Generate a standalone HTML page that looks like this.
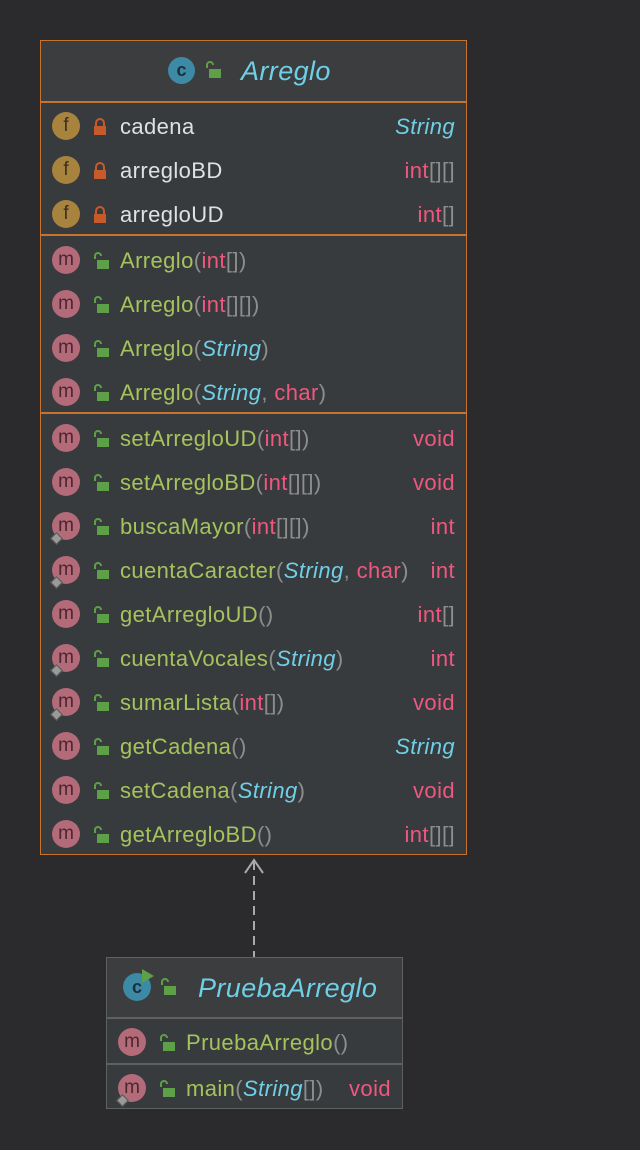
<!DOCTYPE html>
<html><head><meta charset="utf-8"><style>
body{margin:0;width:640px;height:1150px;background:#2b2a2d;position:relative;overflow:hidden;font-family:"Liberation Sans",sans-serif;}
.box{position:absolute;background:#3c3f41;}
.hdr{position:absolute;left:0;right:0;background:#3a3b3c;}
.r{position:absolute;left:0;right:0;height:44px;font-size:22px;line-height:46px;letter-spacing:0.4px;}
.ic{position:absolute;width:28px;height:28px;border-radius:50%;top:8px;left:12px;text-align:center;line-height:27px;font-size:19px;color:#3a2f22;letter-spacing:0}
.f{background:#a8833e;}
.m{background:#b36a79;color:#4a2730;}
.lk{position:absolute;top:14px;left:52px;}
.t{position:absolute;left:80px;white-space:nowrap;}
.rt{position:absolute;right:12px;white-space:nowrap;}
.g{color:#a5c25c}.w{color:#e0e0e0}.c{color:#6fcfe6;font-style:italic}.p{color:#f0577f}.b{color:#8d8d8d}
.sep{position:absolute;left:0;right:0;height:2px;}
.dia{position:absolute;left:12px;top:30px;width:7px;height:7px;transform:rotate(45deg);background:#9a9a9a;border:1px solid #555;}
</style></head><body>

<div class="box" style="left:40px;top:40px;width:427px;height:815px;border:1px solid #c8732d;box-sizing:border-box;background:#383b3e">
 <div class="hdr" style="top:0;height:60px;background:#3b3d3e"></div>
 <div style="position:absolute;left:127px;top:16px;width:27px;height:27px;border-radius:50%;background:#3c8aa6;color:#1f2f3a;text-align:center;line-height:27px;font-size:18px;font-weight:bold">c</div>
 <svg style="position:absolute;left:163px;top:20px" width="18" height="18"><path d="M3 7V4a3 3 0 0 1 6 0" stroke="#5ea048" stroke-width="2" fill="none"/><rect x="5" y="8" width="12" height="9" fill="#5ea048"/></svg>
 <div style="position:absolute;left:200px;top:15px;font-size:27px;font-style:italic;color:#6fcfe6;letter-spacing:0.4px">Arreglo</div>
 <div class="sep" style="top:60px;background:#c8732d"></div>
</div>

<div class="box" style="left:106px;top:957px;width:297px;height:152px;border:1px solid #5e6062;box-sizing:border-box;background:#383b3e">
 <div class="hdr" style="top:0;height:59px;background:#3b3d3e"></div>
 <div style="position:absolute;left:16px;top:15px;width:28px;height:28px;border-radius:50%;background:#3c8aa6;color:#1f2f3a;text-align:center;line-height:28px;font-size:18px;font-weight:bold">c</div>
 <svg style="position:absolute;left:34px;top:10px" width="14" height="16"><path d="M1 1L13 8L1 15Z" fill="#5ea048"/></svg>
 <svg style="position:absolute;left:52px;top:20px" width="18" height="18"><path d="M3 7V4a3 3 0 0 1 6 0" stroke="#5ea048" stroke-width="2" fill="none"/><rect x="5" y="8" width="12" height="9" fill="#5ea048"/></svg>
 <div style="position:absolute;left:91px;top:15px;font-size:27px;font-style:italic;color:#6fcfe6;letter-spacing:0.4px">PruebaArreglo</div>
 <div class="sep" style="top:59px;background:#5e6062"></div>
 <div class="sep" style="top:105px;background:#5e6062"></div>
</div>

<div id="rows"></div>

<svg style="position:absolute;left:240px;top:855px" width="30" height="102"><path d="M5 18L14 5L23 18" stroke="#a9a9a9" stroke-width="2" fill="none"/><path d="M14 6V102" stroke="#a9a9a9" stroke-width="2" stroke-dasharray="9,6"/></svg>

<script>
var L='<svg class="lk" width="18" height="18"><path d="M3 7V4a3 3 0 0 1 6 0" stroke="#5ea048" stroke-width="2" fill="none"/><rect x="5" y="8" width="12" height="9" fill="#5ea048"/></svg>';
var P='<svg class="lk" width="18" height="18"><path d="M4 8V5a4 4 0 0 1 8 0V8" stroke="#c75a2b" stroke-width="2" fill="none"/><rect x="2" y="8" width="12" height="9" fill="#c75a2b"/></svg>';
function row(x,y,ic,lock,txt,rt,dia,w){
 return '<div class="r" style="left:'+x+'px;top:'+(y-22)+'px;width:'+w+'px"><div class="ic '+ic+'">'+(ic=='f'?'f':'m')+'</div>'+(dia?'<div class="dia"></div>':'')+lock+'<div class="t">'+txt+'</div>'+(rt?'<div class="rt">'+rt+'</div>':'')+'</div>';
}
var b=function(s){return '<span class="b">'+s+'</span>'},p=function(s){return '<span class="p">'+s+'</span>'},c=function(s){return '<span class="c">'+s+'</span>'},g=function(s){return '<span class="g">'+s+'</span>'};
var ia=p('int')+b('[]'),iaa=p('int')+b('[][]');
var h='';
var X=40,W=427;
h+=row(X,126,'f',P,'<span class="w">cadena</span>',c('String'),0,W);
h+=row(X,170,'f',P,'<span class="w">arregloBD</span>',iaa,0,W);
h+=row(X,214,'f',P,'<span class="w">arregloUD</span>',ia,0,W);
h+='<div style="position:absolute;left:41px;width:425px;top:234px;height:2px;background:#c8732d"></div>';
h+=row(X,260,'m',L,g('Arreglo')+b('(')+ia+b(')'),'',0,W);
h+=row(X,304,'m',L,g('Arreglo')+b('(')+iaa+b(')'),'',0,W);
h+=row(X,348,'m',L,g('Arreglo')+b('(')+c('String')+b(')'),'',0,W);
h+=row(X,392,'m',L,g('Arreglo')+b('(')+c('String')+b(', ')+p('char')+b(')'),'',0,W);
h+='<div style="position:absolute;left:41px;width:425px;top:412px;height:2px;background:#c8732d"></div>';
var ms=[['setArregloUD',ia,p('void'),0],['setArregloBD',iaa,p('void'),0],['buscaMayor',iaa,p('int'),1],['cuentaCaracter',c('String')+b(', ')+p('char'),p('int'),1],['getArregloUD','',ia,0],['cuentaVocales',c('String'),p('int'),1],['sumarLista',ia,p('void'),1],['getCadena','',c('String'),0],['setCadena',c('String'),p('void'),0],['getArregloBD','',iaa,0]];
ms.forEach(function(m,i){h+=row(X,438+44*i,'m',L,g(m[0])+b('(')+m[1]+b(')'),m[2],m[3],W);});
h+=row(106,1042,'m',L,g('PruebaArreglo')+b('()'),'',0,297);
h+=row(106,1088,'m',L,g('main')+b('(')+c('String')+b('[])'),p('void'),1,297);
document.getElementById('rows').innerHTML=h;
</script>
</body></html>
